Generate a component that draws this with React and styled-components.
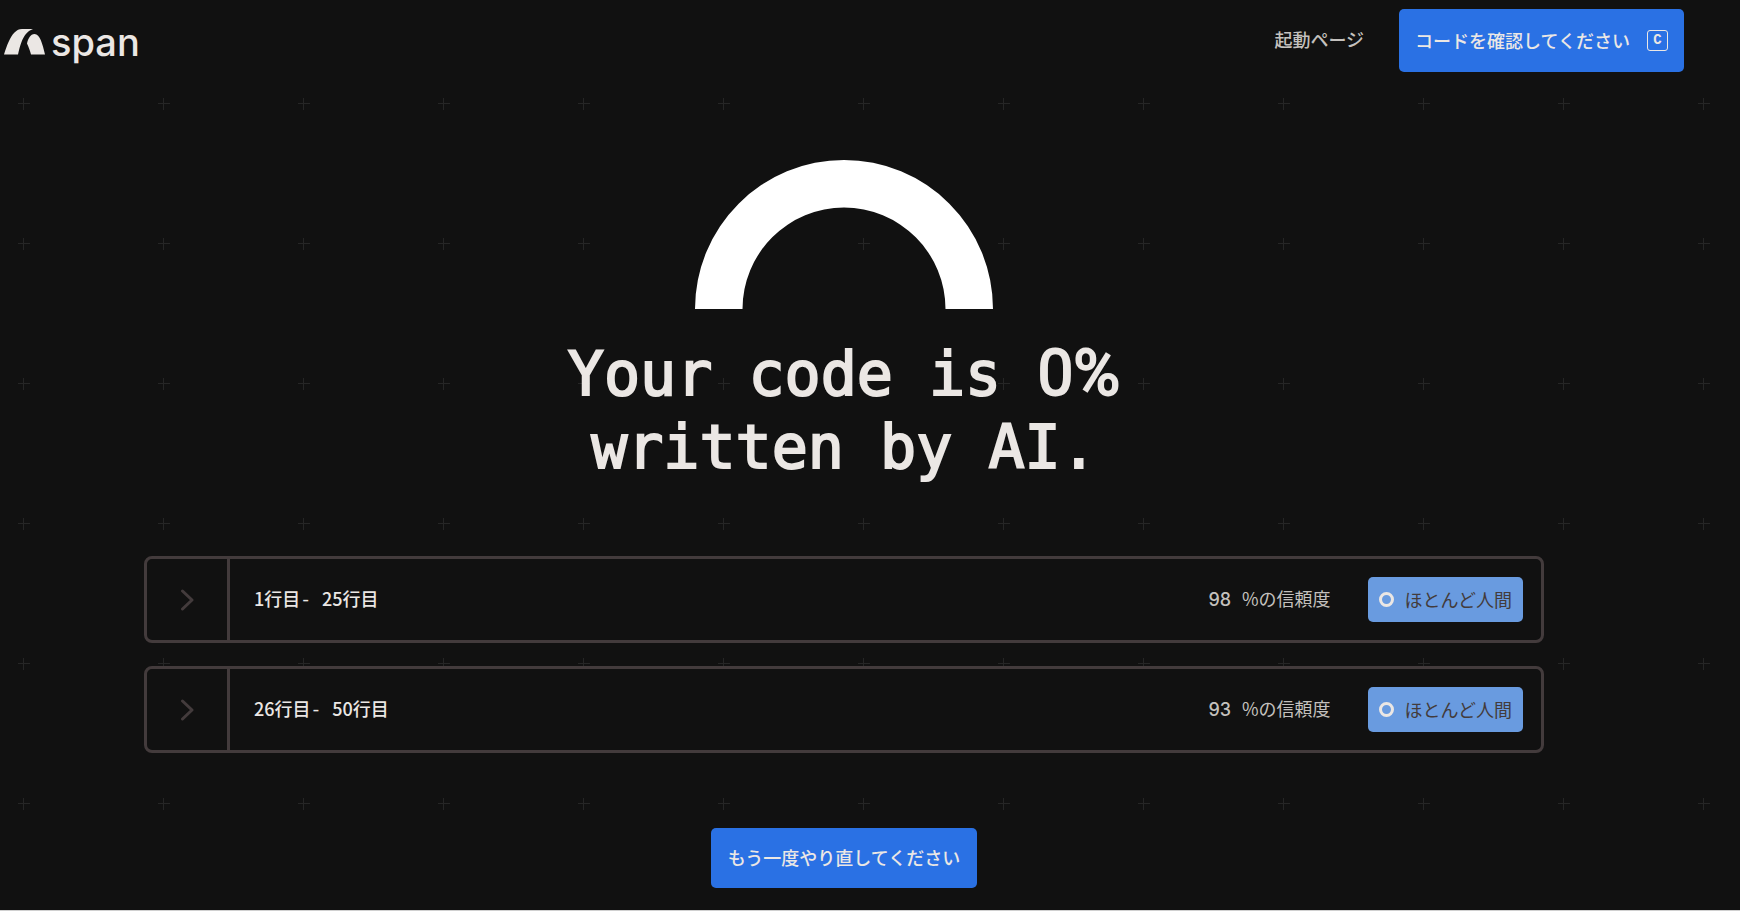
import React from "react";
import styled, { createGlobalStyle } from "styled-components";

const GlobalStyle = createGlobalStyle`
    * {
        box-sizing: border-box;
    }

    body {
        margin: 0;
        background-color: #111111;
        color: #ebe7e4;
        font-family: "Noto Sans CJK JP", sans-serif;
        font-size: 18px;
        line-height: 27px;
    }
`;

// a grid of small crosses, one every 140px
const cross = encodeURIComponent(
    '<svg xmlns="http://www.w3.org/2000/svg" width="140" height="140"><path d="M18 103.5h12M23.5 98v12" stroke="#262626" fill="none"/></svg>'
);

const Page = styled.div`
    display: flex;
    flex-direction: column;
    min-height: 100vh;
    padding: 9px 56px 21px 4px;
    border-bottom: 1px solid #d0d0d0;
    background-color: #111111;
    background-image: url("data:image/svg+xml,${cross}");
`;

const Header = styled.header`
    display: flex;
    align-items: center;
    justify-content: space-between;
`;

const Logo = styled.a`
    display: flex;
    align-items: center;
    gap: 5px;
    padding-top: 2px;
    color: #ebe7e4;
    text-decoration: none;
`;

const LogoName = styled.span`
    font-family: Inter, sans-serif;
    font-size: 38px;
    font-weight: 500;
    line-height: 44px;
`;

const Nav = styled.nav`
    display: flex;
    align-items: center;
    gap: 35px;
`;

const NavLink = styled.a`
    padding-bottom: 2px;
    color: #c4c1be;
    font-weight: 500;
    text-decoration: none;
`;

const Button = styled.button`
    display: flex;
    align-items: center;
    gap: 17px;
    min-height: ${(props) => (props.$tall ? "63px" : "60px")};
    padding: ${(props) => (props.$tall ? "0 16px" : "0 17px 2px")};
    border: 0;
    border-radius: 5px;
    background-color: #2a71e4;
    color: #ebe7e4;
    font: inherit;
    font-weight: 500;
    cursor: pointer;
`;

const Key = styled.kbd`
    width: 21px;
    height: 21px;
    border: 1px solid #ebe7e4;
    border-radius: 3px;
    font-family: "Liberation Mono", monospace;
    font-size: 14px;
    font-weight: 700;
    line-height: 19px;
    text-align: center;
`;

const Main = styled.main`
    display: flex;
    flex-direction: column;
    align-items: center;
    padding-top: 88px;
`;

const Title = styled.h1`
    margin: 29px 0 72px;
    font-family: "DejaVu Sans Mono", monospace;
    font-size: 60px;
    font-weight: 400;
    line-height: 73px;
    text-align: center;
    -webkit-text-stroke: 2px #ebe7e4;
`;

const Amount = styled.span`
    font-family: Roboto, sans-serif;
    font-size: 64px;
    line-height: 1;
`;

const Results = styled.ul`
    display: flex;
    flex-direction: column;
    gap: 23px;
    width: 100%;
    max-width: 1400px;
    margin: 0 0 75px;
    padding: 0;
    list-style: none;
`;

const Row = styled.li`
    display: flex;
    border: 3px solid #433b3c;
    border-radius: 8px;
    background-color: #111111;
`;

const Toggle = styled.button`
    display: flex;
    align-items: center;
    justify-content: center;
    width: 83px;
    padding: 0;
    border: 0;
    border-right: 3px solid #433b3c;
    background: none;
    cursor: pointer;
`;

const RowBody = styled.div`
    display: flex;
    flex: 1;
    align-items: center;
    padding: 18px 18px 18px 24px;
`;

const Lines = styled.span`
    flex: 1;
    font-weight: 500;
`;

const Mono = styled.span`
    font-family: "Liberation Mono", monospace;
    white-space: pre;
`;

const Confidence = styled.span`
    margin-right: 37px;
    color: #c4c1be;
`;

const Score = styled.span`
    font-family: Inter, sans-serif;
    font-weight: 500;
`;

const Badge = styled.span`
    display: flex;
    align-items: center;
    gap: 11px;
    padding: 9px 11px;
    border-radius: 5px;
    background-color: #699be0;
    color: #433b3c;
`;

const Ring = styled.span`
    width: 15px;
    height: 15px;
    border: 3px solid #ebe7e4;
    border-radius: 50%;
`;

const results = [
    { from: 1, to: 25, score: 98 },
    { from: 26, to: 50, score: 93 },
];

const LogoMark = () => (
    <svg width="42" height="26" viewBox="0 0 42 26" fill="#ebe7e4" aria-hidden="true">
        <path d="M0 25.500C3 16 6 8 10.500 3.500C13 1 15 0 18 0H29C23 2 20 7 17.500 13C16 17 15 21 14 25.500Z" />
        <path d="M27 25.500C26 21 24.500 18 23 14.500C24 10 26.500 5 30.500 5C36 5 38.500 15 41 25.500Z" />
    </svg>
);

const Gauge = () => (
    <svg width="298" height="149" viewBox="0 0 298 149" role="img" aria-label="0%">
        <path d="M0 149A149 149 0 0 1 298 149H250.500A101.500 101.500 0 0 0 47.500 149Z" fill="#ffffff" />
    </svg>
);

const Chevron = () => (
    <svg width="14" height="22" viewBox="0 0 14 22" fill="none" aria-hidden="true">
        <path d="M2.500 2L12 11L2.500 20" stroke="#433b3c" strokeWidth="3" strokeLinecap="round" strokeLinejoin="round" />
    </svg>
);

const ResultRow = ({ from, to, score }) => (
    <Row>
        <Toggle aria-label={`${from} - ${to}`}>
            <Chevron />
        </Toggle>
        <RowBody>
            <Lines>
                {from}行目<Mono>- </Mono>{to}行目
            </Lines>
            <Confidence>
                <Score>{score}</Score>
                <Mono> </Mono>%の信頼度
            </Confidence>
            <Badge>
                <Ring />
                ほとんど人間
            </Badge>
        </RowBody>
    </Row>
);

const App = () => {
    return (
        <>
            <GlobalStyle />
            <Page>
                <Header>
                    <Logo href="#">
                        <LogoMark />
                        <LogoName>span</LogoName>
                    </Logo>
                    <Nav>
                        <NavLink href="#">起動ページ</NavLink>
                        <Button $tall>
                            コードを確認してください
                            <Key>C</Key>
                        </Button>
                    </Nav>
                </Header>
                <Main>
                    <Gauge />
                    <Title>
                        Your code is <Amount>0%</Amount>
                        <br />
                        written by AI.
                    </Title>
                    <Results>
                        {results.map((result) => (
                            <ResultRow key={result.from} {...result} />
                        ))}
                    </Results>
                    <Button>もう一度やり直してください</Button>
                </Main>
            </Page>
        </>
    );
};

export default App;
